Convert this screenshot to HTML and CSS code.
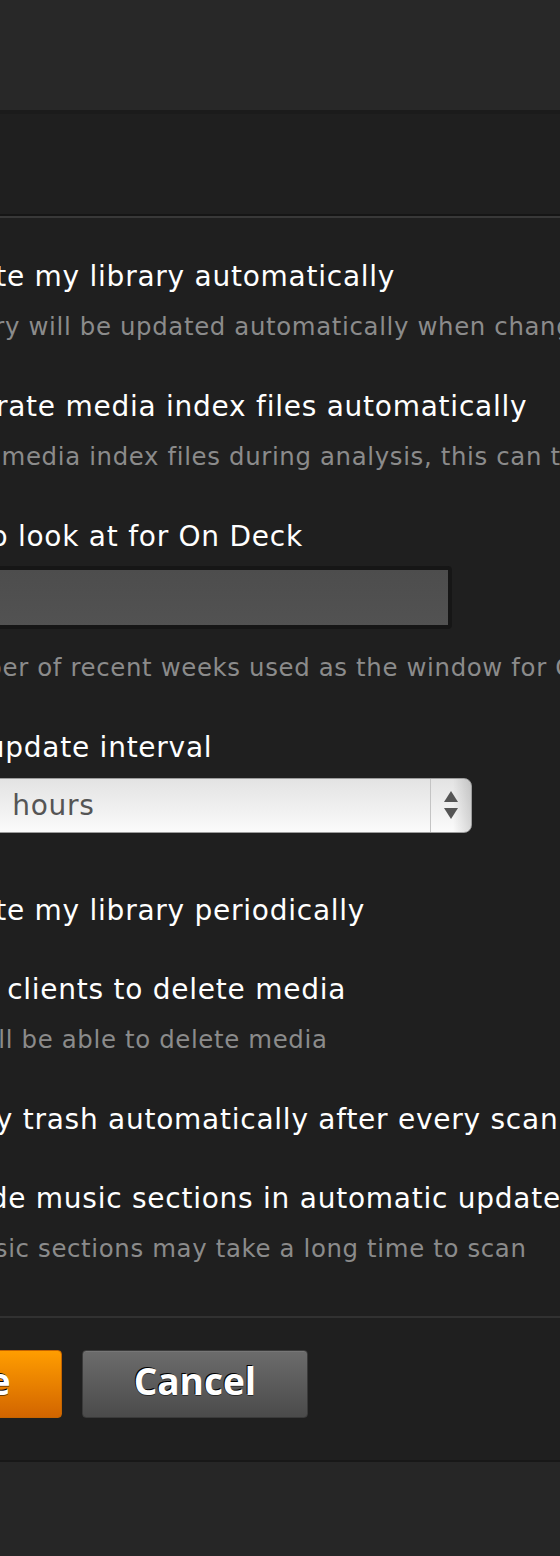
FILE: index.html
```html
<!DOCTYPE html>
<html lang="en">
<head>
<meta charset="utf-8">
<title>Library settings</title>
<link rel="stylesheet" href="styles.css">
</head>
<body>
<div class="page">
  <header class="topbar"></header>
  <div class="subbar"></div>

  <main class="settings">
    <div class="settings-col">
      <div class="setting">
        <label class="check-row"><span class="checkbox is-checked"></span><span class="label">Update my library automatically</span></label>
        <p class="hint">Your library will be updated automatically when changes to library folders are detected.</p>
      </div>

      <div class="setting">
        <label class="check-row"><span class="checkbox"></span><span class="label">Generate media index files automatically</span></label>
        <p class="hint">Generate media index files during analysis, this can take a long time.</p>
      </div>

      <div class="setting">
        <span class="label">Weeks to look at for On Deck</span>
        <div class="text-input"><span class="input-value">2</span></div>
        <p class="hint hint-after-field">The number of recent weeks used as the window for On Deck.</p>
      </div>

      <div class="setting">
        <span class="label">Library update interval</span>
        <div class="select">
          <span class="select-value">every 2 hours</span>
          <span class="select-arrows">
            <svg width="14" height="29" viewBox="0 0 14 29"><polygon points="7,0 14,11 0,11" fill="#555"/><polygon points="0,17 14,17 7,28" fill="#555"/></svg>
          </span>
        </div>
      </div>

      <div class="setting">
        <label class="check-row"><span class="checkbox"></span><span class="label">Update my library periodically</span></label>
      </div>

      <div class="setting">
        <label class="check-row"><span class="checkbox"></span><span class="label">Allow clients to delete media</span></label>
        <p class="hint">Clients will be able to delete media</p>
      </div>

      <div class="setting">
        <label class="check-row"><span class="checkbox is-checked"></span><span class="label">Empty trash automatically after every scan</span></label>
      </div>

      <div class="setting">
        <label class="check-row"><span class="checkbox"></span><span class="label">Include music sections in automatic updates</span></label>
        <p class="hint">Large music sections may take a long time to scan</p>
      </div>
    </div>
  </main>

  <div class="actions">
    <div class="actions-row">
      <button class="btn btn-save" type="button">Save</button>
      <button class="btn btn-cancel" type="button">Cancel</button>
    </div>
  </div>

  <footer class="footer"></footer>
</div>
</body>
</html>
```

FILE: styles.css
```css
html, body {
  margin: 0;
  padding: 0;
  background: #1f1f1f;
  overflow: hidden;
}

body {
  width: 560px;
  height: 1556px;
  font-family: "DejaVu Sans", "Liberation Sans", sans-serif;
}

.page {
  display: flex;
  flex-direction: column;
  height: 1556px;
}

.topbar {
  height: 110px;
  background: #282828;
  border-bottom: 4px solid #1b1b1b;
  flex: none;
}

.subbar {
  height: 100px;
  background: #1f1f1f;
  border-bottom: 2px solid #151515;
  flex: none;
}

.settings {
  border-top: 2px solid #383838;
  padding: 41px 0 48px;
  flex: none;
}

.settings-col {
  margin-left: -126px;
  display: flex;
  flex-direction: column;
  align-items: flex-start;
  gap: 43px;
}

.setting {
  display: flex;
  flex-direction: column;
  align-items: flex-start;
}

.check-row {
  display: flex;
  align-items: center;
  gap: 15px;
}

.checkbox {
  flex: none;
  width: 28px;
  height: 28px;
  border-radius: 4px;
  background: #3c3c3c;
  border: 1px solid #111;
}

.checkbox.is-checked {
  background: #cc7b19;
}

.label {
  font-size: 28px;
  line-height: 36px;
  color: #ffffff;
  letter-spacing: 0.75px;
  white-space: nowrap;
}

.hint {
  margin: 13px 0 0;
  font-size: 24.4px;
  line-height: 38px;
  color: #8b8b8b;
  letter-spacing: 0.65px;
  white-space: nowrap;
}

.hint-after-field {
  margin-top: 20px;
}

.text-input {
  margin-top: 11px;
  width: 578px;
  height: 63px;
  box-sizing: border-box;
  border: 4px solid #161616;
  border-radius: 4px;
  background: linear-gradient(#4d4d4d, #525252);
  display: flex;
  align-items: center;
  padding: 0 14px;
}

.input-value {
  font-size: 26px;
  color: #eee;
}

.select {
  margin: 12px 0 17px;
  width: 598px;
  height: 55px;
  box-sizing: border-box;
  border: 1px solid #9c9c9c;
  border-radius: 8px;
  background: linear-gradient(#e3e3e3, #f1f1f1 60%, #fbfbfb);
  display: flex;
  align-items: stretch;
  overflow: hidden;
}

.select-value {
  flex: 1;
  padding-left: 17px;
  font-size: 28px;
  line-height: 53px;
  letter-spacing: 0.7px;
  color: #555;
  white-space: nowrap;
}

.select-arrows {
  flex: none;
  width: 40px;
  border-left: 1px solid #c4c4c4;
  display: flex;
  align-items: center;
  justify-content: center;
  background: linear-gradient(90deg, rgba(0,0,0,0) 55%, rgba(0,0,0,0.14));
}

.select-arrows svg {
  display: block;
  margin-left: -1px;
}

.actions {
  border-top: 2px solid #313131;
  border-bottom: 2px solid #181818;
  padding: 32px 0 42px;
  flex: none;
}

.actions-row {
  margin-left: -126px;
  display: flex;
  gap: 20px;
}

.btn {
  box-sizing: border-box;
  height: 68px;
  padding: 0 50px 6px;
  border-radius: 4px;
  font-family: "Open Sans", "DejaVu Sans", sans-serif;
  font-weight: 700;
  font-size: 37px;
  line-height: 60px;
  color: #fff;
  text-shadow: -1px -1px 0 #000, 0 1px 0 rgba(0,0,0,0.5);
  cursor: pointer;
}

.btn-save {
  border: 1px solid #c56400;
  background: linear-gradient(#ff9d00, #d26500);
}

.btn-cancel {
  padding: 0 51px 6px;
  border: 1px solid #3a3a3a;
  background: linear-gradient(#6c6c6c, #4b4b4b);
  box-shadow: inset 0 1px 0 rgba(255,255,255,0.08);
}

.footer {
  flex: 1;
  background: #262626;
}
```
